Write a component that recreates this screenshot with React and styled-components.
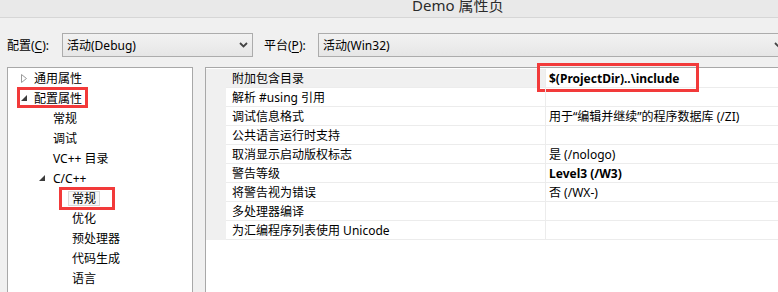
import styled, { createGlobalStyle } from "styled-components";

const GlobalStyle = createGlobalStyle`
  html, body {
    margin: 0;
    padding: 0;
    background: #f0f0f0;
    overflow: hidden;
  }
  body {
    font-family: "Noto Sans", "Noto Sans CJK SC", sans-serif;
    font-size: 12px;
    color: #000;
  }
`;

const Window = styled.div`
  width: 778px;
  height: 292px;
  overflow: hidden;
  display: flex;
  flex-direction: column;
  background: #f0f0f0;
`;

const TitleBar = styled.div`
  height: 17px;
  flex-shrink: 0;
  display: flex;
  align-items: flex-end;
  padding-left: 412px;
  background: #e9e9e9;
  border-bottom: 1px solid #d6d6d6;
  overflow: hidden;
`;

const TitleText = styled.span`
  font-size: 15px;
  line-height: 15px;
  margin-bottom: 4px;
  color: #2b2b2b;
  white-space: nowrap;
`;

const ConfigBar = styled.div`
  display: flex;
  align-items: center;
  padding: 15px 0 0 7px;
  height: 24px;
  flex-shrink: 0;
`;

const FieldLabel = styled.label`
  width: ${(p) => p.$width}px;
  flex-shrink: 0;
  white-space: nowrap;
  u {
    text-decoration: underline;
    text-underline-offset: 2px;
  }
`;

const Combo = styled.div`
  width: ${(p) => p.$width}px;
  height: 24px;
  box-sizing: border-box;
  flex-shrink: 0;
  display: flex;
  align-items: center;
  justify-content: space-between;
  padding: 0 4px 0 4px;
  margin-right: ${(p) => p.$gap || 0}px;
  border: 1px solid #acacac;
  background: linear-gradient(#f2f2f2, #e6e6e6);
  white-space: nowrap;
`;

const Main = styled.div`
  display: flex;
  gap: 12px;
  padding: 10px 0 0 7px;
  flex: 1;
  min-height: 0;
`;

const TreePanel = styled.div`
  width: 186px;
  height: 240px;
  box-sizing: border-box;
  flex-shrink: 0;
  border: 1px solid #a8a8a8;
  background: #fff;
  padding-left: 1px;
`;

const TreeRow = styled.div`
  position: relative;
  height: 20px;
  display: flex;
  align-items: center;
  padding-left: ${(p) => p.$level * 19 + 6}px;
  white-space: nowrap;
`;

const Toggle = styled.span`
  width: 19px;
  height: 20px;
  flex-shrink: 0;
  display: flex;
  align-items: center;
  padding-left: ${(p) => p.$offset}px;
  box-sizing: border-box;
`;

const Selected = styled.span`
  position: relative;
  margin-left: -4px;
  padding: 0 3px;
  line-height: 13px;
  border: 1px solid #dadada;
  background: #f7f7f7;
`;

const Callout = styled.span`
  position: absolute;
  left: ${(p) => p.$left}px;
  top: ${(p) => p.$top}px;
  width: ${(p) => p.$w}px;
  height: ${(p) => p.$h}px;
  box-sizing: border-box;
  border: 3px solid #f23a3a;
  pointer-events: none;
`;

const GridPanel = styled.div`
  width: 620px;
  height: 240px;
  box-sizing: border-box;
  flex-shrink: 0;
  border: 1px solid #a8a8a8;
  background: #fff;
  padding-top: 1px;
`;

const GridRow = styled.div`
  display: flex;
  height: 19px;
`;

const Gutter = styled.div`
  width: 20px;
  flex-shrink: 0;
  background: #f0f0f0;
`;

const NameCell = styled.div`
  width: 319px;
  flex-shrink: 0;
  box-sizing: border-box;
  padding-left: 6px;
  display: flex;
  align-items: center;
  border-bottom: 1px solid #ececec;
  background: ${(p) => (p.$active ? "#f0f0f0" : "#fff")};
  white-space: nowrap;
`;

const ValueCell = styled.div`
  position: relative;
  flex: 1;
  box-sizing: border-box;
  padding-left: 3px;
  display: flex;
  align-items: center;
  border-left: 1px solid #ececec;
  border-bottom: 1px solid #ececec;
  font-weight: ${(p) => (p.$bold ? 700 : 400)};
  white-space: nowrap;
`;

const Chevron = () => (
  <svg width="9" height="6" viewBox="0 0 9 6">
    <path d="M1 1 L4.5 4.5 L8 1" fill="none" stroke="#444" strokeWidth="1.8" />
  </svg>
);

const Collapsed = () => (
  <svg width="6" height="9" viewBox="0 0 6 9">
    <path d="M0.5 0.5 L5.5 4.5 L0.5 8.5 Z" fill="#fff" stroke="#9a9a9a" strokeWidth="1" />
  </svg>
);

const Expanded = () => (
  <svg width="6" height="6" viewBox="0 0 6 6">
    <path d="M6 0 L6 6 L0 6 Z" fill="#3c3c3c" />
  </svg>
);

const tree = [
  { level: 0, text: "通用属性", toggle: "closed" },
  { level: 0, text: "配置属性", toggle: "open", mark: true },
  { level: 1, text: "常规" },
  { level: 1, text: "调试" },
  { level: 1, text: "VC++ 目录" },
  { level: 1, text: "C/C++", toggle: "open" },
  { level: 2, text: "常规", selected: true },
  { level: 2, text: "优化" },
  { level: 2, text: "预处理器" },
  { level: 2, text: "代码生成" },
  { level: 2, text: "语言" },
];

const props = [
  { name: "附加包含目录", value: "$(ProjectDir)..\\include", bold: true, mark: true },
  { name: "解析 #using 引用", value: "" },
  { name: "调试信息格式", value: "用于“编辑并继续”的程序数据库 (/ZI)" },
  { name: "公共语言运行时支持", value: "" },
  { name: "取消显示启动版权标志", value: "是 (/nologo)" },
  { name: "警告等级", value: "Level3 (/W3)", bold: true },
  { name: "将警告视为错误", value: "否 (/WX-)" },
  { name: "多处理器编译", value: "" },
  { name: "为汇编程序列表使用 Unicode", value: "" },
];

export default function App() {
  return (
    <Window>
      <GlobalStyle />
      <TitleBar>
        <TitleText>Demo 属性页</TitleText>
      </TitleBar>
      <ConfigBar>
        <FieldLabel $width={55}>
          配置(<u>C</u>):
        </FieldLabel>
        <Combo $width={191} $gap={11}>
          活动(Debug)
          <Chevron />
        </Combo>
        <FieldLabel $width={54}>
          平台(<u>P</u>):
        </FieldLabel>
        <Combo $width={470}>
          活动(Win32)
          <Chevron />
        </Combo>
      </ConfigBar>
      <Main>
        <TreePanel>
          {tree.map((item, i) => (
            <TreeRow key={i} $level={item.level}>
              <Toggle $offset={item.level === 0 ? 6 : 5}>
                {item.toggle === "closed" && <Collapsed />}
                {item.toggle === "open" && <Expanded />}
              </Toggle>
              {item.selected ? (
                <Selected>
                  {item.text}
                  <Callout $left={-10} $top={-5} $w={56} $h={23} />
                </Selected>
              ) : (
                item.text
              )}
              {item.mark && <Callout $left={8} $top={-1} $w={71} $h={21} />}
            </TreeRow>
          ))}
        </TreePanel>
        <GridPanel>
          {props.map((p, i) => (
            <GridRow key={i}>
              <Gutter />
              <NameCell $active={i === 0}>{p.name}</NameCell>
              <ValueCell $bold={p.bold}>
                {p.value}
                {p.mark && <Callout $left={-9} $top={-6} $w={162} $h={29} />}
              </ValueCell>
            </GridRow>
          ))}
        </GridPanel>
      </Main>
    </Window>
  );
}
